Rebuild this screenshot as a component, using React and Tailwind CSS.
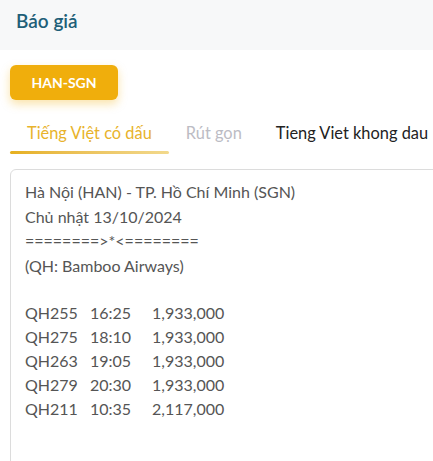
import { useState } from "react";

const flights = [
    ["QH255", "16:25", "1,933,000"],
    ["QH275", "18:10", "1,933,000"],
    ["QH263", "19:05", "1,933,000"],
    ["QH279", "20:30", "1,933,000"],
    ["QH211", "10:35", "2,117,000"],
];

const tabs = ["Tiếng Việt có dấu", "Rút gọn", "Tieng Viet khong dau"];

export default function App() {
    const [tab, setTab] = useState(0);

    return (
        <div className="w-[433px] h-[461px] overflow-hidden bg-white font-['Lato',sans-serif]">
            {/* Header */}
            <div className="h-[50px] bg-[#f7f8f9] flex items-center px-4">
                <h1 className="text-[19px] font-semibold text-[#1e5f78] -mt-[8px]">Báo giá</h1>
            </div>

            {/* Route chip */}
            <div className="pl-[10px] pt-[15px]">
                <button className="w-[108px] h-[35px] rounded-md bg-[#f0ae0c] text-white text-[14px] font-bold shadow-[0_4px_10px_rgba(240,174,12,0.35)]">
                    HAN-SGN
                </button>
            </div>

            {/* Tabs */}
            <div className="flex pl-[10px] mt-[15px] whitespace-nowrap">
                {tabs.map((t, i) => (
                    <button
                        key={t}
                        onClick={() => setTab(i)}
                        className={`relative h-[40px] text-[16.4px] px-[17px] ${
                            i === tab
                                ? "text-[#e8b32c]"
                                : i === 1
                                ? "text-[#bcbcc4]"
                                : "text-[#222]"
                        }`}
                    >
                        <span className="relative -top-[2px]">{t}</span>
                        {i === tab && (
                            <span className="absolute left-0 right-0 bottom-[1px] h-[3px] rounded-full bg-gradient-to-r from-[#e6b01c] to-[#f2d98c]" />
                        )}
                    </button>
                ))}
            </div>

            {/* Quote text */}
            <div className="ml-[10px] mt-[14px] w-[440px] h-[320px] border border-[#dcdcdc] rounded-tl-md px-[14px] pt-[10px] text-[16px] leading-[24.5px] text-[#555]">
                <div>Hà Nội (HAN) - TP. Hồ Chí Minh (SGN)</div>
                <div>Chủ nhật 13/10/2024</div>
                <div>========&gt;*&lt;========</div>
                <div>(QH: Bamboo Airways)</div>
                <div className="h-[23px]" />
                <div className="leading-[24px]">
                    {flights.map(([code, time, price]) => (
                        <div key={code} className="flex">
                            <span className="w-[65px]">{code}</span>
                            <span className="w-[62px]">{time}</span>
                            <span>{price}</span>
                        </div>
                    ))}
                </div>
            </div>
        </div>
    );
}
